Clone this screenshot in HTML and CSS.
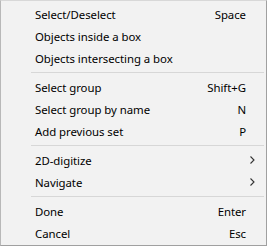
FILE: index.html
```html
<!DOCTYPE html>
<html>
<head>
<meta charset="utf-8">
<link rel="stylesheet" href="styles.css">
</head>
<body>
<div class="menu">
  <div class="item"><span class="label">Select/Deselect</span><span class="key">Space</span></div>
  <div class="item"><span class="label">Objects inside a box</span></div>
  <div class="item"><span class="label">Objects intersecting a box</span></div>
  <div class="sep"></div>
  <div class="item"><span class="label">Select group</span><span class="key">Shift+G</span></div>
  <div class="item"><span class="label">Select group by name</span><span class="key">N</span></div>
  <div class="item"><span class="label">Add previous set</span><span class="key">P</span></div>
  <div class="sep"></div>
  <div class="item sub"><span class="label">2D-digitize</span><svg class="chev" width="5" height="8" viewBox="0 0 5 8"><path d="M0.5 0.5 L4 4 L0.5 7.5" fill="none" stroke="#333" stroke-width="1.1"/></svg></div>
  <div class="item sub"><span class="label">Navigate</span><svg class="chev" width="5" height="8" viewBox="0 0 5 8"><path d="M0.5 0.5 L4 4 L0.5 7.5" fill="none" stroke="#333" stroke-width="1.1"/></svg></div>
  <div class="sep"></div>
  <div class="item"><span class="label">Done</span><span class="key">Enter</span></div>
  <div class="item"><span class="label">Cancel</span><span class="key">Esc</span></div>
</div>
</body>
</html>
```
FILE: styles.css
```css
html, body {
  margin: 0;
  padding: 0;
  background: #f2f2f2;
}
.menu {
  width: 267px;
  height: 246px;
  box-sizing: border-box;
  background: #f2f2f2;
  border: 1px solid #a0a0a0;
  border-top-color: #d8d8d8;
  border-left-color: #b8b8b8;
  padding: 2px 0 1px 0;
  font-family: "Noto Sans", sans-serif;
  font-size: 11.4px;
  letter-spacing: -0.05px;
  color: #000;
  display: flex;
  flex-direction: column;
}
.item {
  height: 22px;
  display: flex;
  align-items: center;
  padding: 0 20px 0 34px;
}
.item.sub {
  padding-right: 11px;
}
.label {
  flex: 1;
}
.key {
  text-align: right;
}
.sep {
  height: 1px;
  margin: 3px 2px 3px 30px;
  background: #d7d7d7;
}
.chev {
  display: block;
}
```
